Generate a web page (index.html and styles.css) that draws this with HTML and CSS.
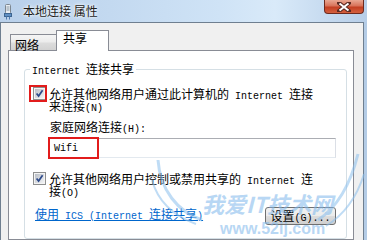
FILE: index.html
```
<html>

<head>
    <link rel="stylesheet" href="styles.css">
</head>

<body>
    <div id="window">
        <div class="titlebar">
            <svg class="app-icon" width="8" height="16" viewBox="0 0 8 16">
                <rect x="1.5" y="0.5" width="5" height="9" rx="1" fill="#e9edf1" stroke="#7d8791" />
                <rect x="2.5" y="2" width="3" height="5" fill="#b9c3cc" />
                <rect x="0.5" y="9.5" width="7" height="3" fill="#5f8fc4" stroke="#3d6591" />
                <rect x="2" y="12.5" width="1" height="3" fill="#4f7bb0" />
                <rect x="5" y="12.5" width="1" height="3" fill="#4f7bb0" />
            </svg>
            <span class="title">本地连接 属性</span>
            <div class="close">
                <svg width="14" height="10" viewBox="0 0 14 10">
                    <path d="M2 1 L12 9 M12 1 L2 9" stroke="#5a2a22" stroke-width="4" stroke-linecap="square" />
                    <path d="M2.5 1.5 L11.5 8.5 M11.5 1.5 L2.5 8.5" stroke="#ffffff" stroke-width="2" />
                </svg>
            </div>
        </div>
        <div class="client">
            <div class="tabs">
                <div class="tab">网络</div>
                <div class="tab tab-active">共享</div>
            </div>
            <div class="panel">
                <fieldset class="group">
                    <legend><span class="en">Internet </span>连接共享</legend>

                    <div class="option">
                        <span class="cb marked">
                            <svg width="13" height="13" viewBox="0 0 13 13">
                                <defs>
                                    <linearGradient id="cbfill" x1="0" y1="0" x2="1" y2="1">
                                        <stop offset="0" stop-color="#b9bec6" />
                                        <stop offset="1" stop-color="#f3f4f6" />
                                    </linearGradient>
                                </defs>
                                <rect x="0.5" y="0.5" width="12" height="12" fill="#f4f4f4" stroke="#8e8f8f" />
                                <rect x="2" y="2" width="9" height="9" fill="url(#cbfill)" />
                                <path d="M3.6 6.4 L5.6 9 L9.6 3.2" fill="none" stroke="#2d4a8a" stroke-width="1.7" />
                            </svg>
                        </span>
                        <label>允许其他网络用户通过此计算机的<span class="en"> Internet </span>连接<br>来连接<span class="en">(N)</span></label>
                    </div>

                    <div class="home-label">家庭网络连接<span class="en">(H):</span></div>
                    <div class="field">
                        <span class="field-text">Wifi</span>
                        <span class="field-mark"></span>
                    </div>

                    <div class="option option-second">
                        <span class="cb">
                            <svg width="13" height="13" viewBox="0 0 13 13">
                                <rect x="0.5" y="0.5" width="12" height="12" fill="#f4f4f4" stroke="#8e8f8f" />
                                <rect x="2" y="2" width="9" height="9" fill="url(#cbfill)" />
                                <path d="M3.6 6.4 L5.6 9 L9.6 3.2" fill="none" stroke="#2d4a8a" stroke-width="1.7" />
                            </svg>
                        </span>
                        <label>允许其他网络用户控制或禁用共享的<span class="en"> Internet </span>连<br>接<span class="en">(O)</span></label>
                    </div>

                    <div class="actions">
                        <a href="#" class="link">使用<span class="en"> ICS (Internet </span>连接共享<span class="en">)</span></a>
                        <button class="btn" type="button">设置<span class="en">(G)...</span></button>
                    </div>
                </fieldset>
            </div>
        </div>
    </div>

    <div class="watermark">
        <svg class="wings" width="217" height="90" viewBox="0 0 217 90">
            <path d="M8 10 C 10 40, 28 62, 52 70" fill="none" stroke="#8cc0ee" stroke-width="3" />
            <path d="M2 30 C 8 52, 24 66, 46 74" fill="none" stroke="#8cc0ee" stroke-width="2" />
            <path d="M208 4 C 200 36, 186 58, 168 70" fill="none" stroke="#8cc0ee" stroke-width="3" />
            <path d="M214 24 C 206 50, 192 66, 176 76" fill="none" stroke="#8cc0ee" stroke-width="2" />
        </svg>
        <div class="wm-name">我爱IT技术网</div>
        <div class="wm-url">www.52ij.com</div>
    </div>
</body>

</html>
```

FILE: styles.css
```
body {
    margin: 0;
    width: 367px;
    height: 240px;
    overflow: hidden;
    position: relative;
    font-family: "Noto Sans CJK SC", sans-serif;
    font-size: 12px;
    color: #000;
}

.en {
    font-family: "Liberation Mono", monospace;
    font-size: 10px;
    line-height: 6px;
    white-space: pre;
}

#window {
    height: 240px;
    background: #b4cce6;
}

.titlebar {
    height: 22px;
    display: flex;
    align-items: center;
    padding-left: 4px;
    background: linear-gradient(to right, #b9d0ea 0%, #c3d9f0 30%, #cfe3f6 60%, #d9eaf9 75%, #b7cee8 100%);
}

.app-icon {
    margin-top: 1px;
}

.title {
    margin-left: 11px;
    line-height: 14px;
    color: #1b1b1b;
    text-shadow: 0 0 4px #ffffff, 0 0 2px #ffffff;
}

.close {
    margin-left: auto;
    margin-right: 3px;
    align-self: flex-start;
    width: 40px;
    height: 14px;
    box-sizing: border-box;
    border: 1px solid #6e2a1e;
    border-top: none;
    border-radius: 0 0 4px 4px;
    background: linear-gradient(#e9a792 0%, #d8735a 45%, #c33f22 55%, #d4603e 100%);
    display: flex;
    align-items: center;
    justify-content: center;
}

.client {
    margin-right: 3px;
    height: 210px;
    border: 1px solid #6f7f90;
    border-bottom: none;
    background: #f0f0f0;
    padding: 7px 9px 0 7px;
    overflow: hidden;
}

.tabs {
    display: flex;
    align-items: flex-end;
    padding-left: 2px;
    height: 20px;
}

.tab {
    border: 1px solid #898c95;
    border-bottom: none;
    padding: 4px 0 0 4px;
    line-height: 11px;
    background: linear-gradient(#f5f5f5 0%, #ececec 45%, #dcdcdc 55%, #d2d2d2 100%);
    width: 41px;
    height: 11px;
}

.tab-active {
    position: relative;
    z-index: 1;
    margin-bottom: -1px;
    margin-left: -1px;
    width: 45px;
    height: 12px;
    padding: 1px 0 7px 6px;
    line-height: 12px;
    background: #fff;
}

.panel {
    border: 1px solid #898c95;
    background: #fff;
    height: 176px;
    padding: 12px 10px 0 15px;
}

.group {
    margin: 0;
    border: 1px solid #d5dfe5;
    border-radius: 3px;
    padding: 12px 10px 13px 8px;
}

.group legend {
    padding: 0 2px;
    margin-left: -3px;
    line-height: 12px;
}

.option {
    display: flex;
    align-items: flex-start;
}

.option label {
    margin-left: 3px;
    margin-top: 1px;
    line-height: 12px;
}

.option-second {
    margin-top: 14px;
}

.cb {
    position: relative;
    width: 13px;
    height: 13px;
    flex: none;
}

.cb svg {
    display: block;
}

.marked::after {
    content: "";
    position: absolute;
    left: -4px;
    top: -2px;
    width: 18px;
    height: 17px;
    box-sizing: border-box;
    border: 2px solid #e21c1c;
}

.home-label {
    margin: 9px 0 0 17px;
    line-height: 12px;
}

.field {
    position: relative;
    display: flex;
    align-items: center;
    margin: 5px 0 0 15px;
    width: 288px;
    height: 20px;
    box-sizing: border-box;
    border: 1px solid #dbdfe6;
    border-top-color: #abadb3;
    border-bottom-color: #e3e9ef;
    padding: 1px 0 0 5px;
}

.field-text {
    font-family: "Liberation Mono", monospace;
    font-size: 10px;
    line-height: 12px;
}

.field-mark {
    position: absolute;
    left: -1px;
    top: -2px;
    width: 51px;
    height: 22px;
    box-sizing: border-box;
    border: 2px solid #e21c1c;
}

.actions {
    display: flex;
    justify-content: space-between;
    align-items: flex-start;
    margin-top: 10px;
}

.link {
    margin: 1px 0 0 2px;
    line-height: 12px;
    color: #0066cc;
    text-decoration: underline;
}

.btn {
    width: 71px;
    height: 18px;
    padding: 0;
    border: 1px solid #707070;
    border-radius: 3px;
    background: linear-gradient(#f2f2f2 0%, #ebebeb 50%, #dddddd 50%, #cfcfcf 100%);
    font-family: "Noto Sans CJK SC", sans-serif;
    font-size: 12px;
    line-height: 14px;
    color: #000;
}

.watermark {
    position: absolute;
    left: 150px;
    top: 150px;
    width: 217px;
    height: 90px;
    overflow: hidden;
    pointer-events: none;
    opacity: 0.55;
    color: #7fb8ec;
}

.wings {
    position: absolute;
    left: 0;
    top: 0;
}

.wm-name {
    position: absolute;
    left: 52px;
    top: 40px;
    font-size: 22px;
    font-weight: bold;
    font-style: italic;
    line-height: 26px;
    white-space: nowrap;
}

.wm-url {
    position: absolute;
    left: 70px;
    top: 70px;
    font-family: "Liberation Sans", sans-serif;
    font-size: 16px;
    font-weight: bold;
    line-height: 18px;
}
```
